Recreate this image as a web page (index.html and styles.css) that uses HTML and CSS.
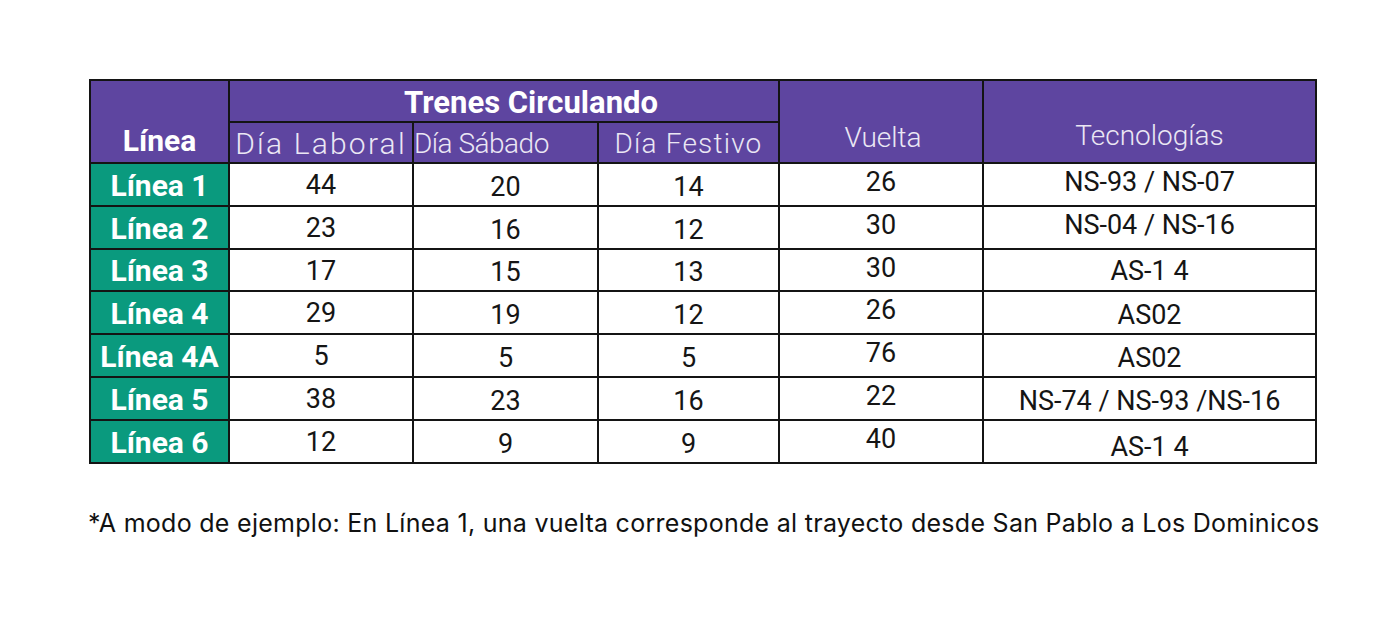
FILE: index.html
```html
<!DOCTYPE html>
<html lang="es">
<head>
<meta charset="utf-8">
<title>Trenes circulando</title>
<link rel="stylesheet" href="styles.css">
</head>
<body>
<main class="page">
  <table class="trains">
    <colgroup>
      <col class="c-linea">
      <col class="c-laboral">
      <col class="c-sabado">
      <col class="c-festivo">
      <col class="c-vuelta">
      <col class="c-tec">
    </colgroup>
    <thead>
      <tr class="h1">
        <th rowspan="2" class="hd-bold hd-linea">Línea</th>
        <th colspan="3" class="hd-bold hd-trenes">Trenes Circulando</th>
        <th rowspan="2" class="hd-light hd-vuelta">Vuelta</th>
        <th rowspan="2" class="hd-light hd-tec">Tecnologías</th>
      </tr>
      <tr class="h2">
        <th class="hd-light hd-laboral">Día Laboral</th>
        <th class="hd-light hd-sabado">Día Sábado</th>
        <th class="hd-light hd-festivo">Día Festivo</th>
      </tr>
    </thead>
    <tbody>
      <tr><th class="ln">Línea 1</th><td>44</td><td class="sf">20</td><td class="sf">14</td><td class="vu">26</td><td class="tc">NS-93 / NS-07</td></tr>
      <tr><th class="ln">Línea 2</th><td>23</td><td class="sf">16</td><td class="sf">12</td><td class="vu">30</td><td class="tc">NS-04 / NS-16</td></tr>
      <tr class="r42"><th class="ln">Línea 3</th><td>17</td><td class="sf">15</td><td class="sf">13</td><td class="vu">30</td><td>AS-1 4</td></tr>
      <tr><th class="ln">Línea 4</th><td>29</td><td class="sf">19</td><td class="sf">12</td><td class="vu">26</td><td class="sf">AS02</td></tr>
      <tr><th class="ln">Línea 4A</th><td>5</td><td class="sf">5</td><td class="sf">5</td><td class="vu">76</td><td class="sf">AS02</td></tr>
      <tr><th class="ln">Línea 5</th><td>38</td><td class="sf">23</td><td class="sf">16</td><td class="vu">22</td><td class="sf">NS-74 / NS-93 /NS-16</td></tr>
      <tr><th class="ln">Línea 6</th><td>12</td><td class="sf">9</td><td class="sf">9</td><td class="vu">40</td><td class="low">AS-1 4</td></tr>
    </tbody>
  </table>
  <p class="note">*A modo de ejemplo: En Línea 1, una vuelta corresponde al trayecto desde San Pablo a Los Dominicos</p>
</main>
</body>
</html>
```

FILE: styles.css
```css
html, body {
  margin: 0;
  padding: 0;
  background: #ffffff;
}

.page {
  padding: 79px 0 0 89px;
}

.trains {
  border-collapse: collapse;
  table-layout: fixed;
  width: 1226px;
  border: 2px solid #141414;
  font-family: Roboto, "Liberation Sans", sans-serif;
}

.c-linea { width: 139px; }
.c-laboral { width: 184px; }
.c-sabado { width: 185px; }
.c-festivo { width: 181px; }
.c-vuelta { width: 204px; }
.c-tec { width: 333px; }

.trains th,
.trains td {
  border: 2px solid #141414;
  padding: 0;
  text-align: center;
  vertical-align: middle;
  line-height: 1;
  white-space: nowrap;
}

.trains thead th {
  background: #5e45a0;
}

.h1 { height: 42px; }
.h2 { height: 41px; }
.trains tbody tr { height: 43px; }
.trains tbody tr.r42 { height: 42px; }

.trains thead th.hd-bold {
  color: #ffffff;
  font-weight: 700;
  font-size: 30px;
}

.trains thead th.hd-linea {
  vertical-align: bottom;
  padding-bottom: 6px;
}

.trains thead th.hd-trenes {
  font-size: 31px;
  padding-left: 54px;
  padding-top: 2px;
}

.trains thead th.hd-light {
  color: #ebe7f4;
  font-weight: 300;
  font-size: 28px;
}

.trains thead th.hd-laboral {
  overflow: visible;
  padding-top: 2px;
  font-size: 30px;
  letter-spacing: 2.2px;
}

.trains thead th.hd-sabado {
  text-align: left;
  padding-top: 3px;
  letter-spacing: -0.5px;
}

.trains thead th.hd-festivo {
  padding-top: 3px;
  letter-spacing: 1.2px;
}

.trains thead th.hd-vuelta {
  vertical-align: bottom;
  padding-bottom: 10px;
  padding-left: 4px;
}

.trains thead th.hd-tec {
  vertical-align: bottom;
  padding-bottom: 12px;
}

.trains tbody th.ln {
  background: #0a9a7e;
  color: #ffffff;
  font-weight: 700;
  font-size: 30px;
  padding-top: 2px;
}

.trains td {
  color: #151515;
  font-size: 27px;
  padding-top: 2px;
}

.trains td.sf { padding-top: 5px; }
.trains td.vu { padding-top: 0; padding-bottom: 4px; }
.trains td.tc { padding-top: 0; padding-bottom: 4px; }
.trains td.low { padding-top: 12px; }

.note {
  margin: 44px 0 0 -1px;
  font-family: Inter, "Noto Sans", sans-serif;
  font-size: 25px;
  color: #111111;
  letter-spacing: 0.28px;
}
```
